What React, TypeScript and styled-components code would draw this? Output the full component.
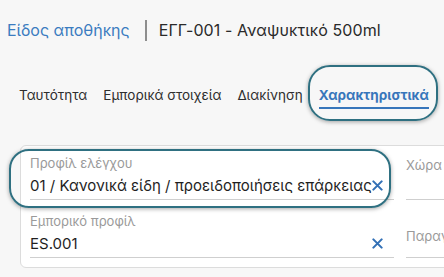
import styled, { createGlobalStyle } from 'styled-components'

const GlobalStyle = createGlobalStyle`
  html, body {
    margin: 0;
    padding: 0;
    background: #f7f7f7;
    overflow: hidden;
  }
  body {
    font-family: Inter, "Noto Sans", "Liberation Sans", sans-serif;
    color: #2b2b2b;
  }
`

const Page = styled.div`
  width: 444px;
  height: 277px;
  overflow: hidden;
  position: relative;
`

const Header = styled.header`
  display: flex;
  align-items: center;
  height: 60px;
  padding-left: 7px;
  font-size: 16px;
`

const Crumb = styled.a`
  color: #3b7cc0;
  text-decoration: none;
`

const Divider = styled.span`
  width: 2px;
  height: 21px;
  background: #8e8e8e;
  margin: 0 12px 0 15px;
`

const Title = styled.span`
  color: #2a2a2a;
  white-space: nowrap;
  letter-spacing: 0.1px;
`

const Tabs = styled.nav`
  display: flex;
  align-items: flex-start;
  gap: 16px;
  height: 70px;
  box-sizing: border-box;
  padding: 27px 0 0 19px;
  font-size: 13.5px;
`

const Tab = styled.div<{ $active?: boolean }>`
  position: relative;
  white-space: nowrap;
  line-height: 16px;
  color: ${p => (p.$active ? '#3776bb' : '#2e2e2e')};
  font-weight: ${p => (p.$active ? 700 : 400)};
  padding-bottom: 4px;
  border-bottom: 2px solid ${p => (p.$active ? '#3776bb' : 'transparent')};
`

const Highlight = styled.span<{ $t: number; $r: number; $b: number; $l: number; $radius: number }>`
  position: absolute;
  top: ${p => p.$t}px;
  right: ${p => p.$r}px;
  bottom: ${p => p.$b}px;
  left: ${p => p.$l}px;
  border: 2px solid #2f7081;
  border-radius: ${p => p.$radius}px;
  box-shadow: 0 1px 4px rgba(0, 0, 0, 0.35);
  pointer-events: none;
`

const Card = styled.section`
  margin: 15px 0 0 20px;
  width: 520px;
  box-sizing: border-box;
  background: #ffffff;
  border: 1px solid #dcdcdc;
  border-radius: 6px;
  padding: 8px 0 9px 9px;
  display: grid;
  grid-template-columns: 364px 150px;
  column-gap: 12px;
  row-gap: 12px;
`

const Field = styled.div`
  position: relative;
  height: 46px;
  display: flex;
  flex-direction: column;
`

const Label = styled.div<{ $offset?: number }>`
  font-size: 13px;
  color: #9a9a9a;
  height: 18px;
  line-height: 18px;
  margin-top: ${p => p.$offset ?? 0}px;
  white-space: nowrap;
`

const ValueRow = styled.div`
  display: flex;
  align-items: center;
  height: 27px;
  border-bottom: 1px solid #cfcfcf;
  margin-top: auto;
`

const Value = styled.div`
  flex: 1;
  font-size: 15px;
  color: #1f1f1f;
  white-space: nowrap;
  overflow: hidden;
  margin-right: -14px;
`

const Clear = styled.button`
  border: 0;
  background: transparent;
  padding: 0;
  width: 14px;
  height: 14px;
  margin-right: 10px;
  display: flex;
  align-items: center;
  justify-content: center;
  position: relative;
  color: #3270b6;
`

function ClearIcon() {
  return (
    <svg width="11" height="11" viewBox="0 0 12 12" fill="none">
      <path d="M1.5 1.5l9 9M10.5 1.5l-9 9" stroke="currentColor" strokeWidth="2.3" strokeLinecap="round" />
    </svg>
  )
}

export default function App() {
  return (
    <Page>
      <GlobalStyle />
      <Header>
        <Crumb>Είδος αποθήκης</Crumb>
        <Divider />
        <Title>ΕΓΓ-001 - Αναψυκτικό 500ml</Title>
      </Header>

      <Tabs>
        <Tab>Ταυτότητα</Tab>
        <Tab>Εμπορικά στοιχεία</Tab>
        <Tab>Διακίνηση</Tab>
        <Tab $active>
          Χαρακτηριστικά
          <Highlight $t={-22} $r={-9} $b={-14} $l={-11} $radius={22} />
        </Tab>
      </Tabs>

      <Card>
        <Field>
          <Label>Προφίλ ελέγχου</Label>
          <ValueRow>
            <Value>01 / Κανονικά είδη / προειδοποιήσεις επάρκειας</Value>
            <Clear>
              <ClearIcon />
            </Clear>
          </ValueRow>
          <Highlight $t={-5} $r={3} $b={-8} $l={-21} $radius={20} />
        </Field>
        <Field>
          <Label $offset={2}>Χώρα</Label>
          <ValueRow />
        </Field>
        <Field>
          <Label>Εμπορικό προφίλ</Label>
          <ValueRow>
            <Value>ES.001</Value>
            <Clear>
              <ClearIcon />
            </Clear>
          </ValueRow>
        </Field>
        <Field>
          <Label $offset={15}>Παραγγελία</Label>
          <ValueRow />
        </Field>
      </Card>
    </Page>
  )
}
